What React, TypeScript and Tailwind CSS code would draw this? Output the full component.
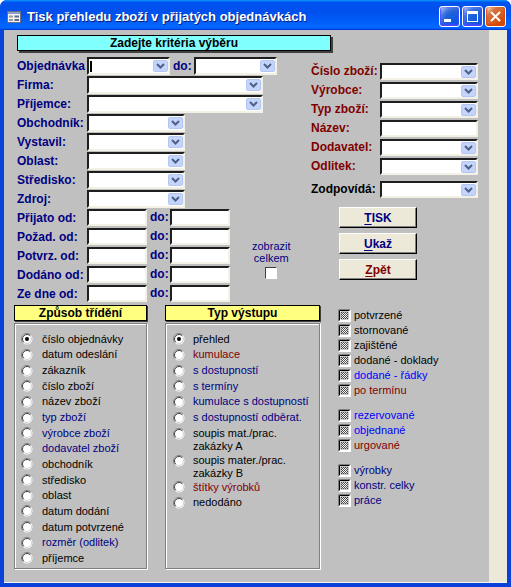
import React from "react";

const NAVY = "text-[#000080]";
const MAROON = "text-[#800000]";
const BLUE = "text-[#0000ff]";

function Drop() {
  return (
    <div className="ml-auto flex h-[12px] w-[15px] shrink-0 items-center justify-center rounded-[2px] border border-[#b4c6f2] bg-[#c4d4fc]">
      <svg width="9" height="6" viewBox="0 0 9 6">
        <path d="M1 1 L4.5 4.5 L8 1" stroke="#4d6185" strokeWidth="2" fill="none" />
      </svg>
    </div>
  );
}

function Box({ className, drop, cursor }: { className: string; drop?: boolean; cursor?: boolean }) {
  return (
    <div
      className={`flex shrink-0 items-center border-2 border-t-[#1e1e1e] border-l-[#1e1e1e] border-r-[#f3f1e6] border-b-[#f3f1e6] bg-white ${className}`}
    >
      {cursor && <div className="ml-[1px] h-[11px] w-[2px] bg-black" />}
      {drop && <Drop />}
    </div>
  );
}

function Radio({ on }: { on?: boolean }) {
  return (
    <svg width="12" height="12" viewBox="0 0 12 12" className="shrink-0">
      <circle cx="6" cy="6" r="5.5" fill="#fff" />
      <path d="M2.1 9.9 A5.5 5.5 0 0 1 9.9 2.1" stroke="#808080" fill="none" />
      <path d="M2.8 9.2 A4.5 4.5 0 0 1 9.2 2.8" stroke="#404040" fill="none" />
      <path d="M2.8 9.2 A4.5 4.5 0 0 0 9.2 2.8" stroke="#d4d0c8" fill="none" />
      {on && <circle cx="6" cy="6" r="2" fill="#000" />}
    </svg>
  );
}

function GrayCheck() {
  return (
    <svg width="13" height="13" viewBox="0 0 13 13" className="shrink-0">
      <defs>
        <pattern id="dith" width="2" height="2" patternUnits="userSpaceOnUse">
          <rect width="2" height="2" fill="#fff" />
          <rect width="1" height="1" fill="#4a4a4a" />
          <rect x="1" y="1" width="1" height="1" fill="#4a4a4a" />
        </pattern>
      </defs>
      <rect width="13" height="13" fill="#fff" />
      <path d="M0.5 12.5 V0.5 H12.5" stroke="#808080" fill="none" />
      <path d="M1.5 11.5 V1.5 H11.5" stroke="#000" fill="none" />
      <rect x="3" y="3" width="7" height="7" fill="url(#dith)" stroke="#404040" strokeWidth="0.6" />
    </svg>
  );
}

function TitleBtn({ kind }: { kind: "min" | "max" | "close" }) {
  const bg =
    kind === "close"
      ? "bg-[radial-gradient(circle_at_90%_90%,#cc4600_0%,#dc6527_55%,#cd7546_70%,#ffccb2_90%,#fff_100%)] shadow-[inset_0_-1px_2px_1px_#da4600]"
      : "bg-[radial-gradient(circle_at_90%_90%,#0054e9_0%,#2263d5_55%,#4479e4_70%,#a3bbec_90%,#fff_100%)] shadow-[inset_0_-1px_2px_1px_#4646ff]";
  return (
    <div className={`flex h-[21px] w-[21px] items-center justify-center rounded-[3px] border border-white ${bg}`}>
      <svg width="19" height="19" viewBox="0 0 19 19">
        {kind === "min" && <rect x="4" y="12" width="7" height="3" fill="#fff" />}
        {kind === "max" && (
          <g fill="none" stroke="#fff">
            <rect x="4.5" y="4.5" width="10" height="10" />
            <rect x="4" y="4" width="11" height="3" fill="#fff" stroke="none" />
          </g>
        )}
        {kind === "close" && (
          <path d="M5 5 L14 14 M14 5 L5 14" stroke="#fff" strokeWidth="2" />
        )}
      </svg>
    </div>
  );
}

function Label({ text, w, color }: { text: string; w: string; color: string }) {
  return <div className={`shrink-0 text-[12px] font-bold leading-[18px] ${w} ${color}`}>{text}</div>;
}

const sortItems: [string, string, boolean?][] = [
  ["číslo objednávky", "text-black", true],
  ["datum odeslání", "text-black"],
  ["zákazník", "text-black"],
  ["číslo zboží", "text-black"],
  ["název zboží", "text-black"],
  ["typ zboží", NAVY],
  ["výrobce zboží", NAVY],
  ["dodavatel zboží", NAVY],
  ["obchodník", "text-black"],
  ["středisko", "text-black"],
  ["oblast", "text-black"],
  ["datum dodání", "text-black"],
  ["datum potvrzené", "text-black"],
  ["rozměr (odlitek)", NAVY],
  ["příjemce", "text-black"],
];

const outItems: [string[], string, boolean?][] = [
  [["přehled"], "text-black", true],
  [["kumulace"], MAROON],
  [["s dostupností"], NAVY],
  [["s termíny"], NAVY],
  [["kumulace s dostupností"], NAVY],
  [["s dostupností odběrat."], NAVY],
  [["soupis mat./prac.", "zakázky A"], "text-black"],
  [["soupis mater./prac.", "zakázky B"], "text-black"],
  [["štítky výrobků"], MAROON],
  [["nedodáno"], "text-black"],
];

const checkGroups: [string, string][][] = [
  [
    ["potvrzené", "text-black"],
    ["stornované", "text-black"],
    ["zajištěné", "text-black"],
    ["dodané - doklady", "text-black"],
    ["dodané - řádky", BLUE],
    ["po termínu", MAROON],
  ],
  [
    ["rezervované", BLUE],
    ["objednané", BLUE],
    ["urgované", MAROON],
  ],
  [
    ["výrobky", NAVY],
    ["konstr. celky", NAVY],
    ["práce", NAVY],
  ],
];

function Header({ text, w }: { text: string; w: string }) {
  return (
    <div
      className={`flex h-[16px] items-center justify-center border border-black bg-[#ffff80] text-[12px] font-bold leading-none text-black shadow-[1px_1px_0_#404040] ${w}`}
    >
      {text}
    </div>
  );
}

export default function App() {
  const leftCombos: [string, string][] = [
    ["Obchodník:", "w-[98px]"],
    ["Vystavil:", "w-[98px]"],
    ["Oblast:", "w-[98px]"],
    ["Středisko:", "w-[98px]"],
    ["Zdroj:", "w-[98px]"],
  ];
  const dates = ["Přijato od:", "Požad. od:", "Potvrz. od:", "Dodáno od:", "Ze dne od:"];
  const rightRows: [string, boolean][] = [
    ["Číslo zboží:", true],
    ["Výrobce:", true],
    ["Typ zboží:", true],
    ["Název:", false],
    ["Dodavatel:", true],
    ["Odlitek:", true],
  ];

  return (
    <div className="flex h-[587px] w-[511px] flex-col overflow-hidden rounded-t-[7px] bg-[#0842d8] font-['Liberation_Sans',Arial,sans-serif]">
      {/* title bar */}
      <div className="flex h-[30px] shrink-0 items-center bg-[linear-gradient(180deg,#0997ff,#0053ee_8%,#0050ee_40%,#0066ff_88%,#0066ff_93%,#005bff_95%,#003dd7_96%,#003dd7)] pl-[7px] pr-[5px] pt-[3px]">
        <svg width="14" height="12" viewBox="0 0 14 12" className="shrink-0">
          <rect x="0.5" y="0.5" width="13" height="11" fill="#f2f2f2" stroke="#6b6f86" />
          <rect x="1" y="1" width="12" height="2" fill="#8aa0c8" />
          <rect x="2" y="4.5" width="4" height="2" fill="#9a9a9a" />
          <rect x="2" y="8" width="4" height="2" fill="#9a9a9a" />
          <rect x="7.5" y="4.5" width="4.5" height="2" fill="#5b6b8c" />
          <rect x="7.5" y="8" width="4.5" height="2" fill="#5b6b8c" />
        </svg>
        <span className="ml-[6px] text-[13px] font-bold text-white [text-shadow:1px_1px_#0a1a7a]">
          Tisk přehledu zboží v přijatých objednávkách
        </span>
        <div className="ml-auto flex gap-[2px]">
          <TitleBtn kind="min" />
          <TitleBtn kind="max" />
          <TitleBtn kind="close" />
        </div>
      </div>

      {/* body */}
      <div className="flex min-h-0 flex-1 px-[4px] pb-[4px]">
        <div className="flex flex-1 border-b border-b-[#f4f3ee]">
          <div className="flex w-[485px] flex-col bg-[#c0c0c0]">
            <div className="ml-[13px] mt-[5px] flex h-[16px] w-[314px] items-center justify-center border border-black bg-[#80ffff] text-[12px] font-bold leading-none text-black shadow-[2px_2px_0_#404040]">
              Zadejte kritéria výběru
            </div>

            {/* criteria */}
            <div className="mt-[6px] flex pl-[13px]">
              <div className="flex w-[294px] flex-col">
                <div className="flex h-[19px]">
                  <Label text="Objednávka" w="w-[70px]" color={NAVY} />
                  <Box className="h-[18px] w-[83px]" drop cursor />
                  <Label text="do:" w="w-[24px] pl-[3px]" color={NAVY} />
                  <Box className="h-[18px] w-[83px]" drop />
                </div>
                <div className="flex h-[19px]">
                  <Label text="Firma:" w="w-[70px]" color={NAVY} />
                  <Box className="h-[18px] w-[176px]" drop />
                </div>
                <div className="flex h-[19px]">
                  <Label text="Příjemce:" w="w-[70px]" color={NAVY} />
                  <Box className="h-[18px] w-[176px]" drop />
                </div>
                {leftCombos.map(([t, w]) => (
                  <div key={t} className="flex h-[19px]">
                    <Label text={t} w="w-[70px]" color={NAVY} />
                    <Box className={`h-[18px] ${w}`} drop />
                  </div>
                ))}
                <div className="flex">
                  <div className="flex flex-col">
                    {dates.map((t) => (
                      <div key={t} className="flex h-[19px]">
                        <Label text={t} w="w-[70px]" color={NAVY} />
                        <Box className="h-[17px] w-[60px]" />
                        <div className={`w-[23px] shrink-0 pl-[3px] text-[12px] font-bold leading-[17px] ${NAVY}`}>do:</div>
                        <Box className="h-[17px] w-[60px]" />
                      </div>
                    ))}
                  </div>
                  <div className="ml-[22px] mt-[31px] flex flex-col items-center">
                    <div className={`text-center text-[11px] leading-[12px] ${NAVY}`}>
                      zobrazit
                      <br />
                      celkem
                    </div>
                    <div className="mt-[3px] h-[12px] w-[12px] border border-t-[#404040] border-l-[#404040] border-r-white border-b-white bg-white" />
                  </div>
                </div>
              </div>

              <div className="mt-[6px] flex flex-col">
                {rightRows.map(([t, d]) => (
                  <div key={t} className="flex h-[19px]">
                    <div className={`w-[69px] shrink-0 text-[12px] font-bold leading-[17px] ${MAROON}`}>{t}</div>
                    <Box className="h-[17px] w-[98px]" drop={d} />
                  </div>
                ))}
                <div className="mt-[4px] flex h-[19px]">
                  <div className="w-[69px] shrink-0 text-[12px] font-bold leading-[17px] text-black">Zodpovídá:</div>
                  <Box className="h-[17px] w-[98px]" drop />
                </div>
                <div className="ml-[28px] mt-[7px] flex flex-col gap-[5px]">
                  {[
                    ["T", "ISK", NAVY],
                    ["U", "kaž", NAVY],
                    ["Z", "pět", MAROON],
                  ].map(([a, b, c]) => (
                    <div
                      key={a}
                      className={`flex h-[21px] w-[78px] items-center justify-center border border-t-white border-l-white border-r-black border-b-black bg-[#ece9d8] text-[12px] font-bold shadow-[inset_-1px_-1px_0_#808080] ${c}`}
                    >
                      <span className="underline underline-offset-[2px]">{a}</span>
                      {b}
                    </div>
                  ))}
                </div>
              </div>
            </div>

            {/* bottom */}
            <div className="mt-[1px] flex pl-[10px]">
              <div className="flex w-[133px] flex-col">
                <Header text="Způsob třídění" w="w-[133px]" />
                <div className="mt-[2px] h-[246px] border border-[#808080] pl-[6px] pt-[7.5px] shadow-[1px_1px_0_#fff,inset_1px_1px_0_#fff]">
                  {sortItems.map(([t, c, on]) => (
                    <div key={t} className="flex h-[15.65px] items-center gap-[9px]">
                      <Radio on={on} />
                      <span className={`text-[11px] leading-[13px] ${c}`}>{t}</span>
                    </div>
                  ))}
                </div>
              </div>

              <div className="ml-[18px] flex w-[155px] flex-col">
                <Header text="Typ výstupu" w="w-[155px]" />
                <div className="mt-[2px] h-[246px] border border-[#808080] pl-[7px] pt-[7.5px] shadow-[1px_1px_0_#fff,inset_1px_1px_0_#fff]">
                  {outItems.map(([lines, c, on]) =>
                    lines.length === 1 ? (
                      <div key={lines[0]} className="flex h-[15.65px] items-center gap-[8px]">
                        <Radio on={on} />
                        <span className={`text-[11px] leading-[13px] ${c}`}>{lines[0]}</span>
                      </div>
                    ) : (
                      <div key={lines[0]} className="flex h-[27px] items-start gap-[8px] pt-[2px]">
                        <div className="pt-[0.5px]">
                          <Radio on={on} />
                        </div>
                        <span className={`text-[11px] leading-[13px] ${c}`}>
                          {lines[0]}
                          <br />
                          {lines[1]}
                        </span>
                      </div>
                    )
                  )}
                </div>
              </div>

              <div className="ml-[18px] mt-[2.5px] flex flex-col">
                {checkGroups.map((g, i) => (
                  <div key={i} className={i === 0 ? "" : "mt-[10px]"}>
                    {g.map(([t, c]) => (
                      <div key={t} className="flex h-[15px] items-center gap-[3px]">
                        <GrayCheck />
                        <span className={`text-[11px] leading-[13px] ${c}`}>{t}</span>
                      </div>
                    ))}
                  </div>
                ))}
              </div>
            </div>
          </div>
          <div className="flex-1 bg-[#ece9d8]" />
        </div>
      </div>
    </div>
  );
}
